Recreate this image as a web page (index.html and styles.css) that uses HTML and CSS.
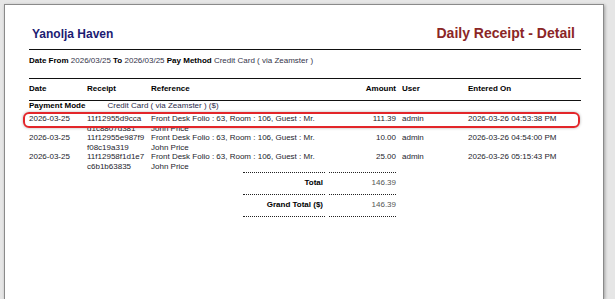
FILE: index.html
```html
<!DOCTYPE html>
<html lang="en">
<head>
<meta charset="utf-8">
<title>Daily Receipt - Detail</title>
<link rel="stylesheet" href="styles.css">
</head>
<body>
<div class="paper">
  <header class="head">
    <h1 class="hotel">Yanolja Haven</h1>
    <h2 class="report-title">Daily Receipt - Detail</h2>
  </header>
  <div class="filters">
    <b>Date From</b> <span class="val">2026/03/25</span> <b>To</b> <span class="val">2026/03/25</span> <b>Pay Method</b> <span class="val">Credit Card ( via Zeamster )</span>
  </div>
  <table class="report">
    <colgroup>
      <col class="w-date"><col class="w-receipt"><col class="w-ref"><col class="w-amount"><col class="w-user"><col class="w-entered">
    </colgroup>
    <thead>
      <tr>
        <th>Date</th><th>Receipt</th><th>Reference</th><th class="num">Amount</th><th class="user">User</th><th>Entered On</th>
      </tr>
    </thead>
    <tbody>
      <tr class="mode">
        <td colspan="6"><b>Payment Mode</b><span class="mode-val">Credit Card ( via Zeamster ) ($)</span></td>
      </tr>
      <tr class="row">
        <td>2026-03-25</td><td>11f12955d9cca<br>d1c8807d381</td><td>Front Desk Folio : 63, Room : 106, Guest : Mr.<br>John Price</td><td class="num">111.39</td><td class="user">admin</td><td>2026-03-26 04:53:38 PM</td>
      </tr>
      <tr class="row">
        <td>2026-03-25</td><td>11f12955e987f9<br>f08c19a319</td><td>Front Desk Folio : 63, Room : 106, Guest : Mr.<br>John Price</td><td class="num">10.00</td><td class="user">admin</td><td>2026-03-26 04:54:00 PM</td>
      </tr>
      <tr class="row">
        <td>2026-03-25</td><td>11f12958f1d1e7<br>c6b1b63835</td><td>Front Desk Folio : 63, Room : 106, Guest : Mr.<br>John Price</td><td class="num">25.00</td><td class="user">admin</td><td>2026-03-26 05:15:43 PM</td>
      </tr>
    </tbody>
  </table>
  <div class="totals">
    <div class="t-label first">Total</div><div class="t-val first">146.39</div>
    <div class="t-label">Grand Total ($)</div><div class="t-val">146.39</div>
  </div>
  <div class="highlight"></div>
</div>
</body>
</html>
```
FILE: styles.css
```css
html, body {
  margin: 0;
  padding: 0;
  height: 100%;
  overflow: hidden;
  background: #e6e6e6;
}
body {
  font-family: "Liberation Sans", Arial, sans-serif;
  color: #222;
}
.paper {
  position: relative;
  box-sizing: border-box;
  margin: 4px 0 0 4px;
  width: 600px;
  height: calc(100% - 4px);
  padding: 20px 22px 0 24px;
  background: #fff;
  border: 1px solid #8a8a8a;
  border-bottom: 0;
  box-shadow: 1px 1px 3px rgba(0, 0, 0, 0.3);
}
.head {
  display: flex;
  justify-content: space-between;
  align-items: baseline;
  line-height: 16px;
  padding-bottom: 7px;
  border-bottom: 1px solid #111;
}
.hotel {
  margin: 0 0 0 3px;
  font-size: 12px;
  font-weight: bold;
  color: #1c1c72;
}
.report-title {
  margin: 0 6px 0 0;
  font-size: 14px;
  font-weight: bold;
  color: #8b2626;
}
.filters {
  font-size: 8px;
  line-height: 12px;
  padding: 5px 0 11px;
  border-bottom: 1px solid #111;
  color: #000;
}
.filters .val {
  color: #34344a;
}
.report {
  width: 552px;
  table-layout: fixed;
  border-collapse: separate;
  border-spacing: 0;
  font-size: 8px;
}
.w-date { width: 58px; }
.w-receipt { width: 64px; }
.w-ref { width: 175px; }
.w-amount { width: 71px; }
.w-user { width: 71px; }
.w-entered { width: 113px; }
.report th {
  text-align: left;
  font-weight: bold;
  color: #000;
  line-height: 12px;
  padding: 4px 0 5px;
  border-bottom: 1px solid #111;
}
.report td {
  padding: 0;
  vertical-align: top;
}
.report .num {
  text-align: right;
  padding-right: 1px;
}
.report .user {
  padding-left: 5px;
}
.report .mode td {
  line-height: 10px;
  padding-bottom: 3px;
  color: #000;
}
.mode-val {
  margin-left: 22px;
  color: #2a2a4a;
}
.report .row td {
  line-height: 9.5px;
  color: #24242c;
}
.totals {
  display: grid;
  grid-template-columns: 82px 67px;
  column-gap: 4px;
  margin: 1px 0 0 214px;
  font-size: 8px;
  line-height: 12px;
}
.t-label, .t-val {
  text-align: right;
  padding: 4px 0 5px;
  border-bottom: 1px dotted #222;
}
.t-label {
  font-weight: bold;
  color: #000;
  padding-right: 2px;
}
.t-val {
  color: #555;
}
.first {
  border-top: 1px dotted #222;
}
.highlight {
  position: absolute;
  left: 18px;
  top: 107px;
  width: 557px;
  height: 16px;
  box-sizing: border-box;
  border: 2px solid #e3262a;
  border-radius: 6px;
  box-shadow: 0 0 3px rgba(0, 0, 0, 0.3);
}
```
